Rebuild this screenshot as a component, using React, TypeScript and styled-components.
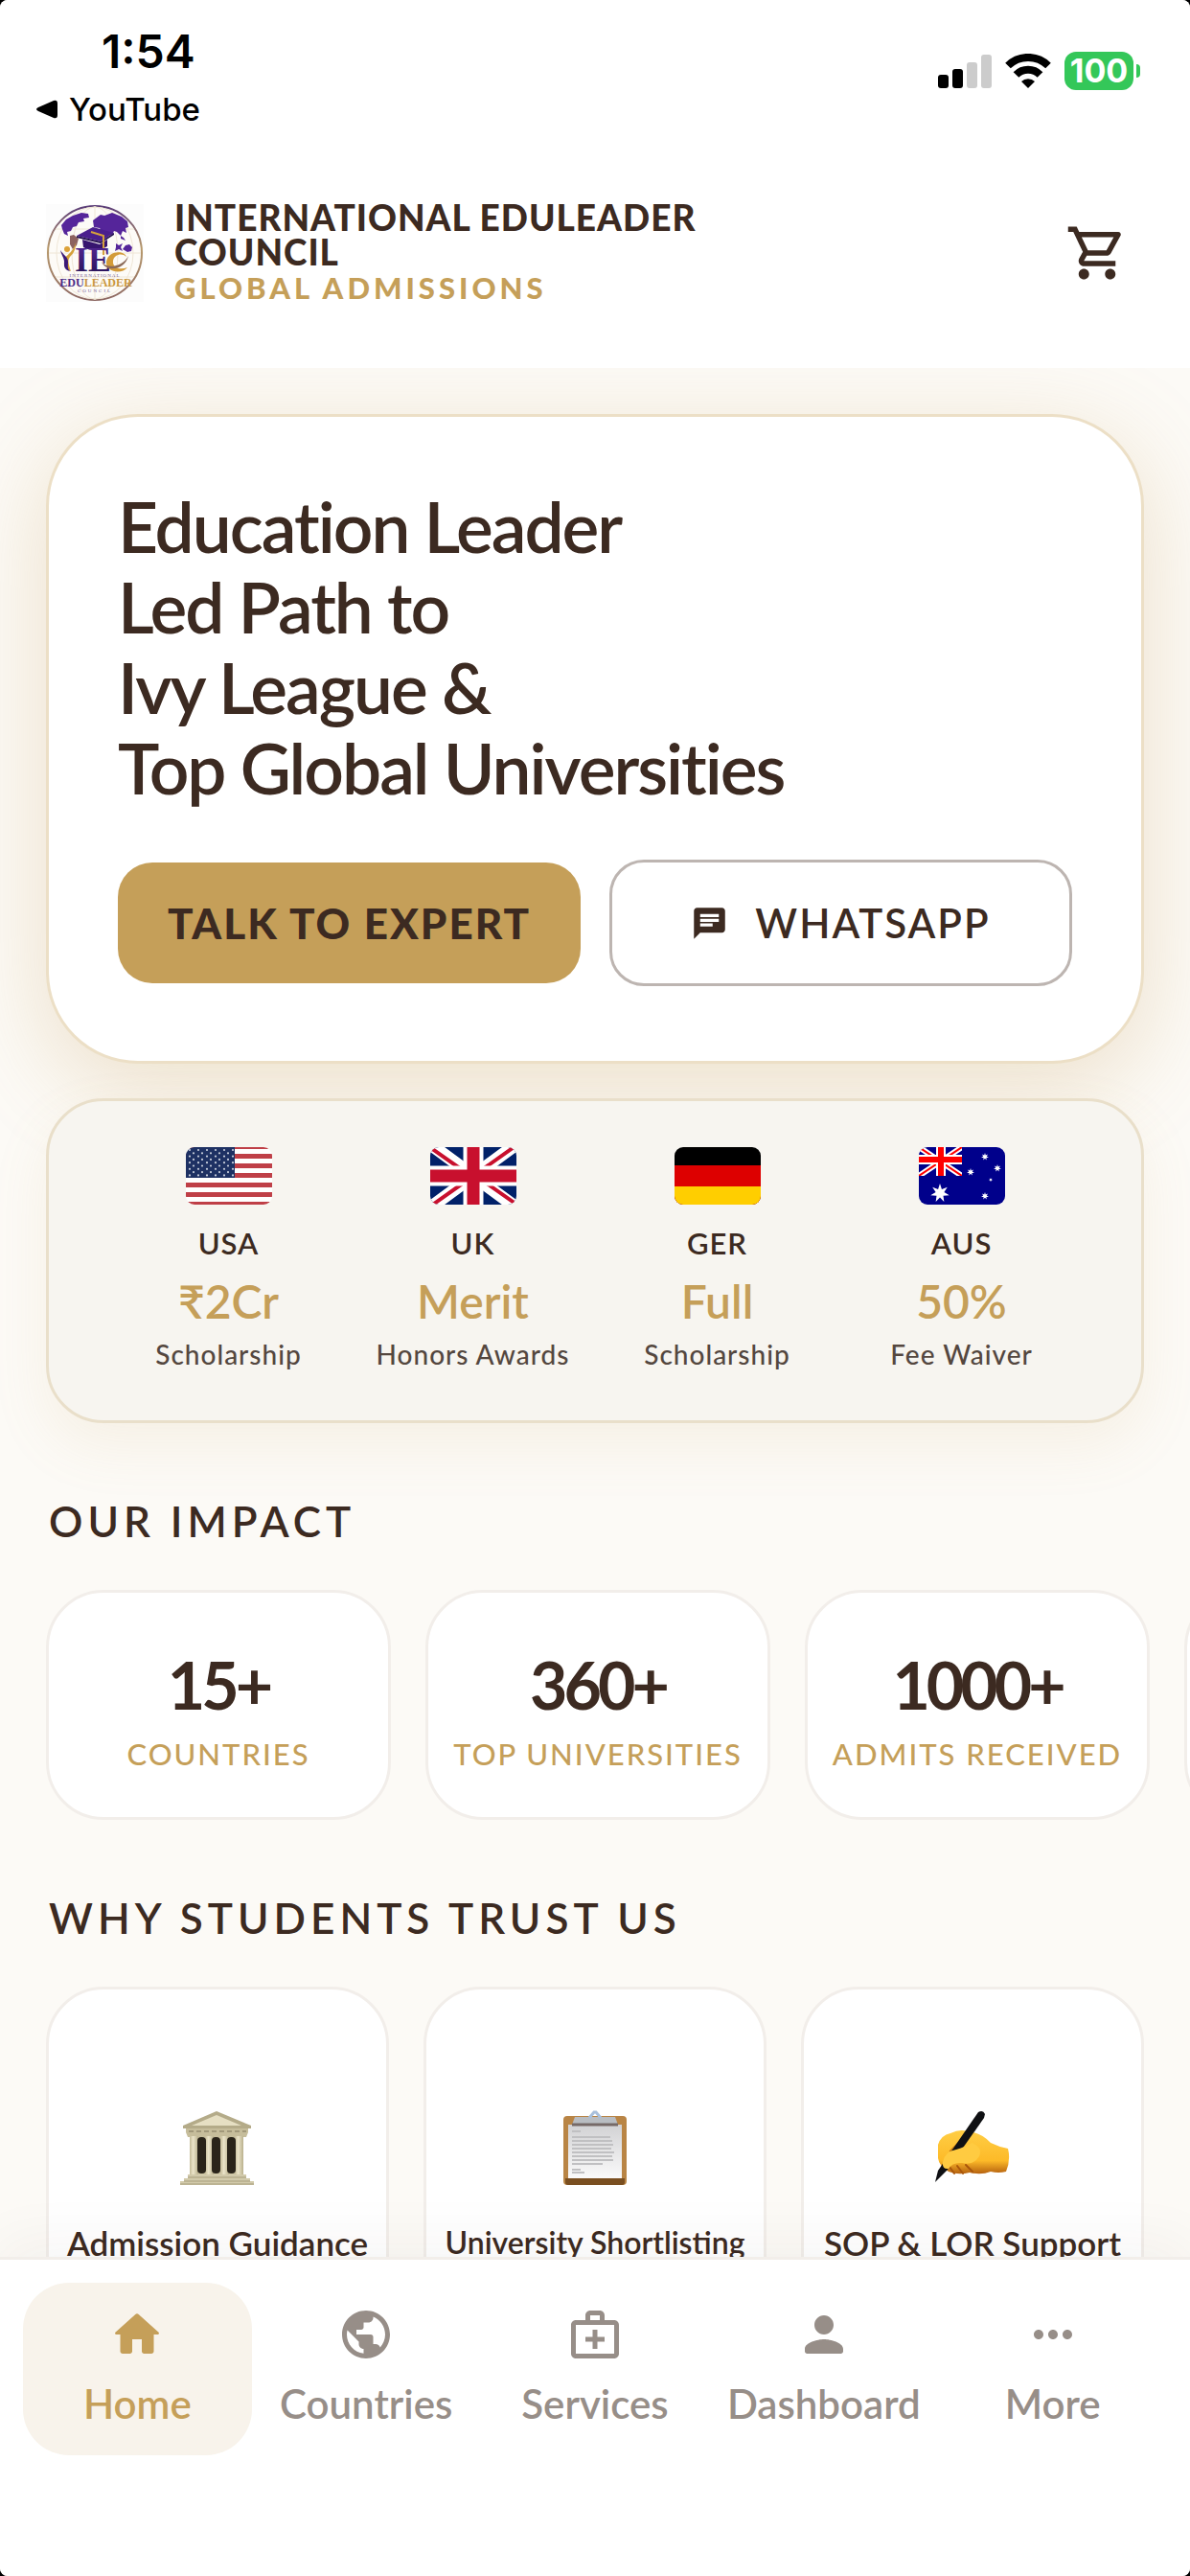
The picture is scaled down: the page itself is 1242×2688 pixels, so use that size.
import React from "react";
import styled, { createGlobalStyle } from "styled-components";
import { MdChat, MdOutlineShoppingCart, MdPublic, MdMoreHoriz } from "react-icons/md";

const ink = "#3c2a21";
const gold = "#c59f59";
const line = "#f2eeea";
const face = '"Lato", "Noto Sans", sans-serif';
const system = '"Inter", "Roboto", sans-serif';

const Global = createGlobalStyle`
  *, *::before, *::after { box-sizing: border-box; }
  html { background: #000; }
  body { margin: 0; font-family: ${face}; color: ${ink}; }
  h1, h2, h3, p, ul { margin: 0; padding: 0; }
  ul { list-style: none; }
  button { font: inherit; color: inherit; background: none; border: 0; padding: 0; cursor: pointer; }
  a { color: inherit; text-decoration: none; }
  svg { display: block; flex: none; }
`;

const Screen = styled.div`
  height: 100vh;
  display: flex;
  flex-direction: column;
  overflow: hidden;
  background: #fcfaf6;
  border-radius: 8px;
`;

const Top = styled.header`
  position: relative;
  z-index: 1;
  flex: none;
  background: #fff;
`;

const StatusBar = styled.div`
  display: flex;
  justify-content: space-between;
  padding: 24px 52px 0 38px;
  height: 144px;
  font-family: ${system};
  color: #000;
`;

const Clock = styled.time`
  display: block;
  padding-left: 68px;
  font-size: 48px;
  line-height: 60px;
  font-weight: 600;
`;

const BackLink = styled.a`
  && { color: #000; }
  display: flex;
  align-items: center;
  gap: 12px;
  font-size: 33px;
  line-height: 60px;
  font-weight: 500;
`;

const Signals = styled.div`
  display: flex;
  align-items: center;
  gap: 14px;
  height: 100px;
`;

const Battery = styled.div`
  display: flex;
  align-items: center;
  gap: 3px;
  &::after {
    content: "";
    width: 4px;
    height: 14px;
    border-radius: 0 6px 6px 0;
    background: #34c759;
  }
`;

const BatteryLevel = styled.span`
  width: 72px;
  height: 40px;
  border-radius: 12px;
  background: #34c759;
  color: #fff;
  font-size: 34px;
  line-height: 40px;
  font-weight: 700;
  text-align: center;
`;

const AppBar = styled.div`
  display: flex;
  align-items: center;
  height: 240px;
  padding: 0 64px 0 48px;
  gap: 32px;
`;

const Brand = styled.div`
  flex: 1;
  min-width: 0;
`;

const BrandName = styled.div`
  max-width: 640px;
  font-size: 37px;
  line-height: 36px;
  font-weight: 900;
  letter-spacing: 1px;
`;

const BrandTag = styled.div`
  font-size: 31px;
  line-height: 38px;
  font-weight: 900;
  letter-spacing: 4px;
  color: ${gold};
`;

const Content = styled.main`
  flex: 1;
  min-height: 0;
  overflow: hidden;
  padding: 48px 48px 0;
`;

const Hero = styled.section`
  border: 3px solid #ecdfc6;
  border-radius: 96px;
  background: #fff;
  padding: 72px 72px 78px;
  box-shadow: 0 24px 96px rgba(197, 159, 89, 0.28);
`;

const HeroTitle = styled.h1`
  font-size: 73px;
  line-height: 84px;
  font-weight: 600;
  letter-spacing: -2px;
`;

const HeroActions = styled.div`
  display: grid;
  grid-template-columns: 1fr 1fr;
  align-items: center;
  gap: 30px;
  margin-top: 54px;
`;

const Action = styled.button<{ $solid?: boolean }>`
  && {
    display: flex;
    align-items: center;
    justify-content: center;
    gap: 28px;
    height: ${(p) => (p.$solid ? 126 : 132)}px;
    border: ${(p) => (p.$solid ? "0" : "3px solid #bdb5b1")};
    border-radius: 36px;
    background: ${(p) => (p.$solid ? gold : "#fff")};
    font-size: ${(p) => (p.$solid ? 44 : 42)}px;
    font-weight: ${(p) => (p.$solid ? 900 : 600)};
    letter-spacing: 2px;
    white-space: nowrap;
  }
`;

const Awards = styled.ul`
  && { padding: 48px 60px 51px; }
  display: grid;
  grid-template-columns: repeat(4, 1fr);
  margin-top: 36px;
  border: 3px solid #e9dfca;
  border-radius: 60px;
  background: #f7f5f0;
  box-shadow: 0 24px 60px rgba(197, 159, 89, 0.1);
`;

const Award = styled.li`
  display: flex;
  flex-direction: column;
  align-items: center;
  white-space: nowrap;
`;

const Flag = styled.svg`
  width: 90px;
  height: 60px;
  border-radius: 9px;
  margin-bottom: 18px;
`;

const Country = styled.span`
  font-size: 31px;
  line-height: 45px;
  font-weight: 600;
  letter-spacing: 1px;
`;

const Amount = styled.strong`
  font-size: 48px;
  line-height: 75px;
  font-weight: 600;
  color: ${gold};
`;

const AwardNote = styled.span`
  font-size: 28px;
  line-height: 36px;
  font-weight: 500;
  letter-spacing: 1px;
  color: #54473f;
`;

const SectionTitle = styled.h2`
  margin: 72px 3px 42px;
  font-size: 44px;
  line-height: 60px;
  font-weight: 600;
  letter-spacing: 5px;
`;

const Impact = styled.ul`
  display: flex;
  gap: 36px;
`;

const ImpactCard = styled.li`
  flex: none;
  width: 360px;
  height: 240px;
  display: flex;
  flex-direction: column;
  align-items: center;
  padding-top: 54px;
  border: 3px solid ${line};
  border-radius: 60px;
  background: #fff;
  white-space: nowrap;
`;

const ImpactValue = styled.strong`
  font-size: 68px;
  line-height: 84px;
  font-weight: 700;
  letter-spacing: -4px;
`;

const ImpactLabel = styled.span`
  font-size: 31px;
  line-height: 60px;
  letter-spacing: 2px;
  font-weight: 500;
  color: ${gold};
`;

const Trust = styled.ul`
  display: grid;
  grid-template-columns: repeat(3, 1fr);
  gap: 36px;
`;

const TrustCard = styled.li`
  height: 360px;
  display: flex;
  flex-direction: column;
  align-items: center;
  gap: 36px;
  padding-top: 126px;
  border: 3px solid ${line};
  border-radius: 60px;
  background: #fff;
  white-space: nowrap;
`;

const TrustLabel = styled.h3<{ $small?: boolean }>`
  font-size: ${(p) => (p.$small ? 32 : 35)}px;
  line-height: 48px;
  font-weight: 600;
`;

const TabBar = styled.nav`
  position: relative;
  z-index: 1;
  flex: none;
  display: grid;
  grid-template-columns: repeat(5, 1fr);
  padding: 24px 24px 126px;
  border-top: 3px solid ${line};
  background: #fff;
  box-shadow: 0 -12px 60px rgba(58, 41, 32, 0.05);
`;

const Tab = styled.a<{ $active?: boolean }>`
  && { color: ${(p) => (p.$active ? gold : "#978e88")}; }
  display: flex;
  flex-direction: column;
  align-items: center;
  gap: 12px;
  height: 180px;
  padding-top: 24px;
  border-radius: 48px;
  background: ${(p) => (p.$active ? "#f8f3eb" : "transparent")};
  font-size: 42px;
  line-height: 60px;
  font-weight: 600;
`;

const Bars = () => (
  <svg width="56" height="35" viewBox="0 0 56 35">
    <rect x="0" y="21" width="11" height="14" rx="3" />
    <rect x="15" y="15" width="11" height="20" rx="3" />
    <rect x="30" y="8" width="11" height="27" rx="3" fill="#ccc" />
    <rect x="45" y="0" width="11" height="35" rx="3" fill="#ccc" />
  </svg>
);

const Wifi = () => (
  <svg width="48" height="36" viewBox="0 0 48 36">
    <path d="M24 36l-7-7a10 10 0 0 1 14 0z" />
    <path d="M11.5 22a17.5 17.5 0 0 1 25 0" fill="none" stroke="#000" strokeWidth="8" />
    <path d="M3 12.5a30 30 0 0 1 42 0" fill="none" stroke="#000" strokeWidth="8" />
  </svg>
);

const Logo = () => (
  <svg width="102" height="102" viewBox="0 0 102 102" role="img" aria-label="International Eduleader Council">
    <defs>
      <linearGradient id="ring" x1="0" y1="0" x2="0" y2="1">
        <stop offset="0" stopColor="#5b3d78" />
        <stop offset=".45" stopColor="#b89a6c" />
        <stop offset="1" stopColor="#8c6762" />
      </linearGradient>
      <linearGradient id="letter" x1="0" y1="0" x2="0" y2="1">
        <stop offset="0" stopColor="#5a2a9c" />
        <stop offset="1" stopColor="#221050" />
      </linearGradient>
    </defs>
    <rect width="102" height="102" fill="#fcfcfc" />
    <circle cx="51" cy="51" r="49" fill="#fdfbf7" stroke="url(#ring)" strokeWidth="2" />
    <g fill="none" stroke="#efe6d6">
      <path d="M51 2v98M3 51h96M10 26h82M10 76h82" />
      <ellipse cx="51" cy="51" rx="24" ry="48" />
      <ellipse cx="51" cy="51" rx="40" ry="48" />
    </g>
    <g fill="#55259a">
      <path d="M16 22l5-6 7-4 9-3 7 1 1 4-6 1 1 3-6 1-2 4-4 1-2 4-4 1 1 4-4-2-2-5z" />
      <path d="M49 17l8-6 4 1 8-3 10 4 6 5 1 6-3 1 1 5-4-2-2 5-4-4-3-1-2 4-5-3-5 1-3-5-6-1z" />
      <path d="M73 41l3 2 4-2-2 4 2 4-4-2-4 2 1-4zM83 43l4-1 3 3-1 4-4 1-5-3zM78 33l3 2 2 3-5-2z" />
    </g>
    <path d="M25 33l4-1 5 4-2 7-4 4-3-5z" fill="#8d6260" />
    <path d="M32 33l17-9 22 6-14 9z" fill="#4a1f8d" />
    <path d="M32 33l25 6 14-9v2l-14 9-25-6z" fill="#241050" />
    <path d="M38 37l18 5 8-5v7c-8 5-18 5-25 1z" fill="#37166f" />
    <path d="M47 29l13 4v20" fill="none" stroke="#d5a13b" strokeWidth="2" />
    <circle cx="22" cy="47" r="3" fill="#dca23a" />
    <path d="M31 40c0 8-2 11-6 15-3 4-1 9 1 15-8-3-8-9-6-14 3-4 9-7 11-16z" fill="#d5a13b" />
    <path d="M15 48c3 5 8 7 8 12 0 4-1 7 2 10-7-2-6-6-6-10s-3-7-4-12z" fill="#3b1a78" />
    <text x="30" y="70" fontFamily="Liberation Serif, serif" fontWeight="700" fontSize="36" fill="url(#letter)">IE</text>
    <path d="M84 55c-2-7-19-7-21 5-1 11 16 14 22 6-7 3-16 1-15-7 1-6 9-9 14-4z" fill="#d39b38" />
    <path d="M58 60c5 8 22 6 28-6-4 16-24 17-28 6z" fill="#8b6a58" />
    <text x="51" y="76" textAnchor="middle" fontFamily="Liberation Serif, serif" fontSize="5" letterSpacing="1" fill="#77619a">INTERNATIONAL</text>
    <text x="52" y="86" textAnchor="middle" fontFamily="Liberation Serif, serif" fontSize="12" fontWeight="700" fill="#c9973f">
      <tspan fill="#4a2a86">EDU</tspan>LEADER
    </text>
    <text x="51" y="92" textAnchor="middle" fontFamily="Liberation Serif, serif" fontSize="5" letterSpacing="2" fill="#77619a">COUNCIL</text>
  </svg>
);

const UsaFlag = () => (
  <Flag viewBox="0 0 90 60" aria-hidden="true">
    <rect width="90" height="60" fill="#fff" />
    {[0, 1, 2, 3, 4, 5, 6].map((i) => (
      <rect key={i} y={i * 10 - 3} width="90" height="5" fill="#bf3f47" />
    ))}
    <rect width="51" height="32" fill="#1e3163" />
    {Array.from({ length: 9 }, (_, r) =>
      Array.from({ length: r % 2 ? 5 : 6 }, (_, c) => (
        <circle key={`${r}-${c}`} cx={4 + c * 9 + (r % 2 ? 4 : 0)} cy={3 + r * 3.3} r="1.1" fill="#c9cfdc" />
      ))
    )}
  </Flag>
);

const UkFlag = () => (
  <Flag viewBox="0 0 90 60" aria-hidden="true">
    <rect width="90" height="60" fill="#012169" />
    <path d="M0 -3L90 63M90 -3L0 63" stroke="#fff" strokeWidth="13" />
    <path d="M-2 -1L45 32M92 61L45 28M93 -4L45 30M-3 64L45 30" stroke="#c8102e" strokeWidth="4" />
    <path d="M45 0v60M0 30h90" stroke="#fff" strokeWidth="21" />
    <path d="M45 0v60M0 30h90" stroke="#c8102e" strokeWidth="13" />
  </Flag>
);

const GermanFlag = () => (
  <Flag viewBox="0 0 90 60" aria-hidden="true">
    <rect width="90" height="60" fill="#000" />
    <rect y="19" width="90" height="41" fill="#d00" />
    <rect y="41" width="90" height="19" fill="#ffce00" />
  </Flag>
);

const star = (cx: number, cy: number, r: number) =>
  Array.from({ length: 14 }, (_, i) => {
    const a = (Math.PI * i) / 7 - Math.PI / 2;
    const d = i % 2 ? r * 0.45 : r;
    return `${cx + d * Math.cos(a)},${cy + d * Math.sin(a)}`;
  }).join(" ");

const AustralianFlag = () => (
  <Flag viewBox="0 0 90 60" aria-hidden="true">
    <rect width="90" height="60" fill="#00008b" />
    <svg width="45" height="30" viewBox="0 0 45 30">
      <path d="M0 0l45 30M45 0L0 30" stroke="#fff" strokeWidth="6" />
      <path d="M0 0l45 30M45 0L0 30" stroke="#f00" strokeWidth="2" />
      <path d="M23 0v30M0 13h45" stroke="#fff" strokeWidth="10" />
      <path d="M23 0v30M0 13h45" stroke="#f00" strokeWidth="6" />
    </svg>
    {[[22, 48, 10], [69, 10, 4], [54, 26, 4], [82, 22, 4], [69, 51, 4], [75, 34, 2]].map(([x, y, r]) => (
      <polygon key={`${x}-${y}`} points={star(x, y, r)} fill="#fff" />
    ))}
  </Flag>
);

const Temple = () => (
  <svg width="78" height="78" viewBox="0 0 78 78" aria-hidden="true">
    <defs>
      <linearGradient id="stone" x1="0" x2="1">
        <stop offset="0" stopColor="#c4bb98" />
        <stop offset=".4" stopColor="#ebe4c9" />
        <stop offset="1" stopColor="#b9b08d" />
      </linearGradient>
    </defs>
    <rect x="10" y="26" width="56" height="41" fill="#cfc7a6" />
    <path d="M38 1l36 15v3H3v-3z" fill="#b4ab89" />
    <path d="M38 5l26 11H12z" fill="#e6dfc3" />
    <path d="M6 19h65v4l-2 5H8l-2-5z" fill="#c6bd9b" />
    <path d="M9 22h60" stroke="#a1987a" strokeWidth="2" strokeDasharray="5 3" />
    {[10, 26, 42, 57].map((x) => (
      <rect key={x} x={x} y="27" width="9" height="40" fill="url(#stone)" />
    ))}
    {[18, 33, 49].map((x) => (
      <rect key={x} x={x} y="28" width="9" height="38" rx="4" fill="#2a241a" />
    ))}
    <path d="M8 67h61v4h4v3h4v4H0v-4h4v-3h4z" fill="#d2caab" />
    <path d="M8 70h61M4 74h69M0 77h77" stroke="#a79e7d" strokeWidth="1" />
  </svg>
);

const Clipboard = () => (
  <svg width="78" height="78" viewBox="0 0 78 78" aria-hidden="true">
    <defs>
      <linearGradient id="sheet" x1="0" y1="0" x2="0" y2="1">
        <stop offset="0" stopColor="#d2d2d4" />
        <stop offset="1" stopColor="#fafafa" />
      </linearGradient>
    </defs>
    <rect x="6" y="6" width="66" height="72" rx="4" fill="#b98545" />
    <path d="M8 71h62v4q0 3-3 3H11q-3 0-3-3z" fill="#7a4f21" />
    <rect x="11" y="15" width="56" height="56" fill="url(#sheet)" />
    <path d="M15 22h9M15 28h40M15 32h42M15 36h43M15 40h41M15 44h44M15 48h42M15 52h43M15 56h32M15 62h9M15 65h13" stroke="#c0c0c2" strokeWidth="2" />
    <path d="M18 7h42l3 8H15z" fill="#b9bdc2" />
    <path d="M33 8l5-6h2l5 6" fill="none" stroke="#a9c0dc" strokeWidth="3" />
    <path d="M15 15h48" stroke="#766a68" strokeWidth="3" />
  </svg>
);

const WritingHand = () => (
  <svg width="78" height="78" viewBox="0 0 78 78" aria-hidden="true">
    <defs>
      <linearGradient id="skin" x1="0" y1="0" x2="0" y2="1">
        <stop offset="0" stopColor="#ffce45" />
        <stop offset=".7" stopColor="#fdba28" />
        <stop offset="1" stopColor="#b5610f" />
      </linearGradient>
    </defs>
    <path d="M3 36Q6 26 16 24Q26 19 34 22Q48 23 58 34Q66 38 76 40Q79 52 74 64Q66 66 58 64Q48 68 36 65Q24 68 14 64Q4 58 3 50Z" fill="url(#skin)" />
    <path d="M15 59l5 7M23 58l6 8M32 57l7 7" stroke="#a9560b" strokeWidth="2" strokeLinecap="round" />
    <path d="M16 44Q22 38 30 30" fill="none" stroke="#c87b16" strokeWidth="4" />
    <path d="M45 2Q50-1 52 4L51 8L13 62L0 75L3 63Z" fill="#0f1013" />
    <path d="M8 54Q10 43 22 41Q32 38 38 34Q50 38 46 48Q40 58 28 55Q18 54 14 61Q7 62 8 54Z" fill="#ffcb41" />
  </svg>
);

const Glyph = ({ d }: { d: string }) => (
  <svg width="60" height="60" viewBox="0 0 24 24" fill="currentColor" aria-hidden="true">
    <path fillRule="evenodd" d={d} />
  </svg>
);

const homeShape =
  "M10 19v-5h4v5c0 .55.45 1 1 1h3c.55 0 1-.45 1-1v-7h1.7c.46 0 .68-.57.33-.87L12.67 3.6c-.38-.34-.96-.34-1.34 0l-8.36 7.53c-.34.3-.13.87.33.87H5v7c0 .55.45 1 1 1h3c.55 0 1-.45 1-1z";
const servicesShape =
  "M20 6h-4V4c0-1.1-.9-2-2-2h-4c-1.1 0-2 .9-2 2v2H4c-1.1 0-2 .9-2 2v12c0 1.1.9 2 2 2h16c1.1 0 2-.9 2-2V8c0-1.1-.9-2-2-2zM10 4h4v2h-4V4zm10 16H4V8h16v12zM13 10h-2v3H8v2h3v3h2v-3h3v-2h-3z";
const personShape =
  "M12 12c2.21 0 4-1.79 4-4s-1.79-4-4-4-4 1.79-4 4 1.79 4 4 4zm0 2c-2.67 0-8 1.34-8 4v1c0 .55.45 1 1 1h14c.55 0 1-.45 1-1v-1c0-2.66-5.33-4-8-4z";

const awards = [
  { flag: <UsaFlag />, country: "USA", amount: "₹2Cr", note: "Scholarship" },
  { flag: <UkFlag />, country: "UK", amount: "Merit", note: "Honors Awards" },
  { flag: <GermanFlag />, country: "GER", amount: "Full", note: "Scholarship" },
  { flag: <AustralianFlag />, country: "AUS", amount: "50%", note: "Fee Waiver" },
];

const impact = [
  { value: "15+", label: "COUNTRIES" },
  { value: "360+", label: "TOP UNIVERSITIES" },
  { value: "1000+", label: "ADMITS RECEIVED" },
  { value: "", label: "" },
];

const tabs = [
  { label: "Home", icon: <Glyph d={homeShape} />, active: true },
  { label: "Countries", icon: <MdPublic size={60} /> },
  { label: "Services", icon: <Glyph d={servicesShape} /> },
  { label: "Dashboard", icon: <Glyph d={personShape} /> },
  { label: "More", icon: <MdMoreHoriz size={60} /> },
];

export default function App() {
  return (
    <>
      <Global />
      <Screen>
        <Top>
          <StatusBar>
            <div>
              <Clock>1:54</Clock>
              <BackLink href="#">
                <svg width="22" height="20" viewBox="0 0 22 20">
                  <path d="M2 8L18 1q4-1 4 3v12q0 4-4 3L2 12q-4-2 0-4z" />
                </svg>
                YouTube
              </BackLink>
            </div>
            <Signals>
              <Bars />
              <Wifi />
              <Battery>
                <BatteryLevel>100</BatteryLevel>
              </Battery>
            </Signals>
          </StatusBar>
          <AppBar>
            <Logo />
            <Brand>
              <BrandName>INTERNATIONAL EDULEADER COUNCIL</BrandName>
              <BrandTag>GLOBAL ADMISSIONS</BrandTag>
            </Brand>
            <button type="button" aria-label="Cart">
              <MdOutlineShoppingCart size={66} />
            </button>
          </AppBar>
        </Top>

        <Content>
          <Hero>
            <HeroTitle>
              Education Leader
              <br />
              Led Path to
              <br />
              Ivy League &amp;
              <br />
              Top Global Universities
            </HeroTitle>
            <HeroActions>
              <Action type="button" $solid>
                TALK TO EXPERT
              </Action>
              <Action type="button">
                <MdChat size={39} />
                WHATSAPP
              </Action>
            </HeroActions>
          </Hero>

          <Awards>
            {awards.map((a) => (
              <Award key={a.country}>
                {a.flag}
                <Country>{a.country}</Country>
                <Amount>{a.amount}</Amount>
                <AwardNote>{a.note}</AwardNote>
              </Award>
            ))}
          </Awards>

          <SectionTitle>OUR IMPACT</SectionTitle>
          <Impact>
            {impact.map((s, i) => (
              <ImpactCard key={i}>
                <ImpactValue>{s.value}</ImpactValue>
                <ImpactLabel>{s.label}</ImpactLabel>
              </ImpactCard>
            ))}
          </Impact>

          <SectionTitle>WHY STUDENTS TRUST US</SectionTitle>
          <Trust>
            <TrustCard>
              <Temple />
              <TrustLabel>Admission Guidance</TrustLabel>
            </TrustCard>
            <TrustCard>
              <Clipboard />
              <TrustLabel $small>University Shortlisting</TrustLabel>
            </TrustCard>
            <TrustCard>
              <WritingHand />
              <TrustLabel>SOP &amp; LOR Support</TrustLabel>
            </TrustCard>
          </Trust>
        </Content>

        <TabBar>
          {tabs.map((t) => (
            <Tab key={t.label} href="#" $active={t.active}>
              {t.icon}
              {t.label}
            </Tab>
          ))}
        </TabBar>
      </Screen>
    </>
  );
}
